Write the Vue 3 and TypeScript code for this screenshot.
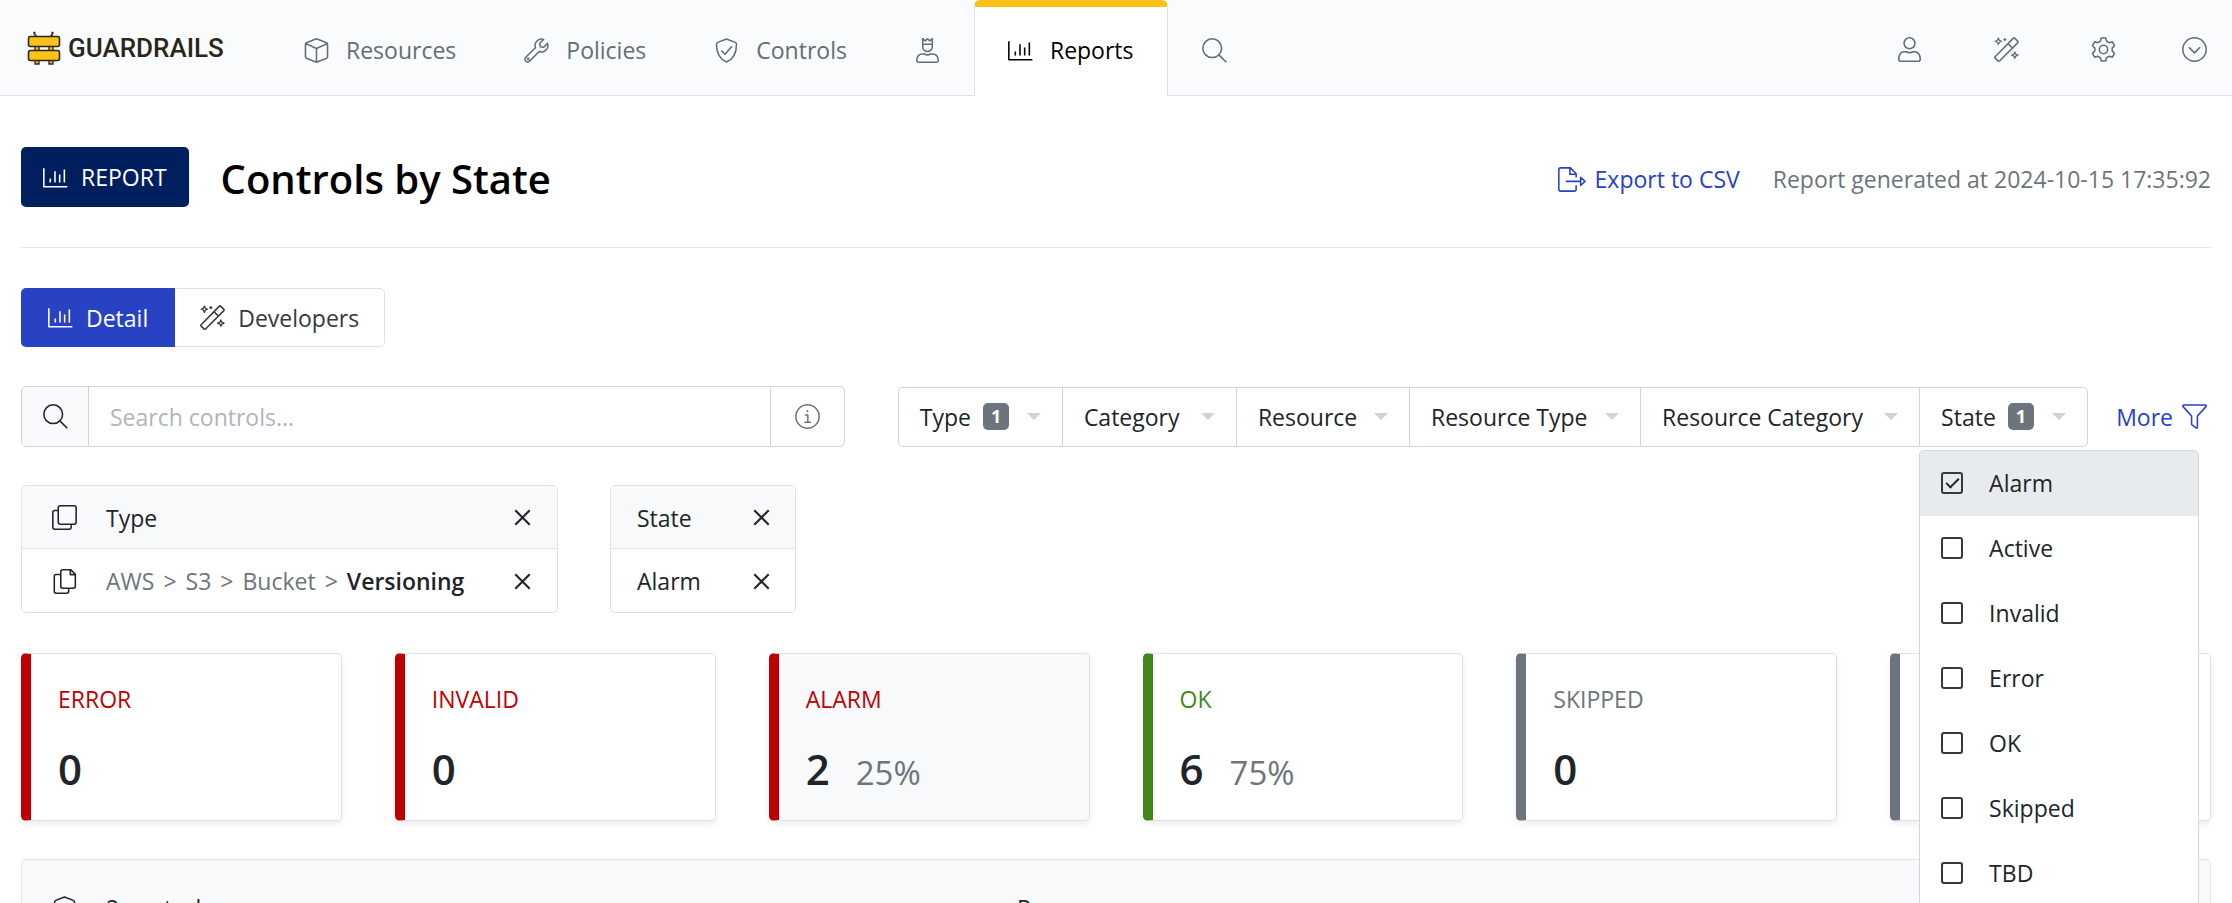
<script setup lang="ts">
import { ref } from 'vue'

interface NavItem { icon: string; label: string; text?: boolean; active?: boolean }
interface Filter { name: string; count?: number }
interface StateCard { label: string; value: number; percent?: string; tone: string; selected?: boolean }

const navItems: NavItem[] = [
  { icon: 'cube', label: 'Resources', text: true },
  { icon: 'wrench', label: 'Policies', text: true },
  { icon: 'shield', label: 'Controls', text: true },
  { icon: 'crown-user', label: 'Grants' },
  { icon: 'chart', label: 'Reports', text: true, active: true },
  { icon: 'search', label: 'Search' },
]
const tools: NavItem[] = [
  { icon: 'user', label: 'Profile' },
  { icon: 'wand', label: 'Developers' },
  { icon: 'gear', label: 'Settings' },
  { icon: 'chevron', label: 'Expand' },
]
const filters: Filter[] = [
  { name: 'Type', count: 1 },
  { name: 'Category' },
  { name: 'Resource' },
  { name: 'Resource Type' },
  { name: 'Resource Category' },
  { name: 'State', count: 1 },
]
const cards: StateCard[] = [
  { label: 'ERROR', value: 0, tone: 'red' },
  { label: 'INVALID', value: 0, tone: 'red' },
  { label: 'ALARM', value: 2, percent: '25%', tone: 'red', selected: true },
  { label: 'OK', value: 6, percent: '75%', tone: 'green' },
  { label: 'SKIPPED', value: 0, tone: 'grey' },
  { label: 'TBD', value: 0, tone: 'grey' },
]
const crumbs = ['AWS', '>', 'S3', '>', 'Bucket', '>']
const states = ['Alarm', 'Active', 'Invalid', 'Error', 'OK', 'Skipped', 'TBD']
const selectedStates = ref<string[]>(['Alarm'])
const query = ref('')

function gearPath(teeth: number): string {
  const points: string[] = []
  for (let i = 0; i < teeth; i++) {
    const a = -Math.PI / 2 + (i * 2 * Math.PI) / teeth
    for (const [r, w] of [[7.9, -3], [11, -2.1], [11, 2.1], [7.9, 3]]) {
      const x = 12 + r * Math.cos(a) - w * Math.sin(a)
      const y = 12 + r * Math.sin(a) + w * Math.cos(a)
      points.push(`${x.toFixed(2)} ${y.toFixed(2)}`)
    }
  }
  return `M${points.join('L')}Z`
}
const gear = gearPath(6)
</script>

<template>
  <div class="page">
    <svg class="sprite" aria-hidden="true">
      <symbol id="i-cube" viewBox="0 0 24 24"><path d="M12 .8 21.7 4.6Q22.6 5 22.6 6V18Q22.6 19 21.7 19.4L12 23.2 2.3 19.4Q1.4 19 1.4 18V6Q1.4 5 2.3 4.6ZM1.8 5.4 12 10 22.2 5.4M12 10V23" /></symbol>
      <symbol id="i-wrench" viewBox="0 0 24 24"><path d="M22.6 5.2A6.2 6.2 0 0 1 14.6 13L5.4 22.2A2.6 2.6 0 0 1 1.7 18.5L11 9.3A6.2 6.2 0 0 1 18.8 1.4L15.1 5.1 15.7 8.3 18.9 8.9Z" /><circle cx="4" cy="20" r=".6" /></symbol>
      <symbol id="i-shield" viewBox="0 0 24 24"><path d="M12 .9 20.4 4.2Q21.6 4.7 21.6 6C21.6 14 18.4 20.4 12 23.1 5.6 20.4 2.4 14 2.4 6Q2.4 4.7 3.6 4.2ZM7 12 10.6 15.6 17.2 8" /></symbol>
      <symbol id="i-crown-user" viewBox="0 0 24 24"><path d="M7.4 .5V8.500A4.600 4.400 0 0 0 16.600 8.500V.5L14.300 2.800 12 .8 9.700 2.800ZM7.400 6H16.600M9 15.400H7.200Q2 15.400 1.600 21.600 1.600 23.200 3.200 23.200H20.800Q22.400 23.200 22.400 21.600 22 15.400 16.800 15.400H15Q12 17 9 15.400Z" /></symbol>
      <symbol id="i-chart" viewBox="0 0 24 24"><path d="M.8 3.2V20.8H23.4M7 13V16.8M11.5 6V16.8M16 9V16.8M20.5 4.2V16.8" /></symbol>
      <symbol id="i-search" viewBox="0 0 24 24"><circle cx="9.8" cy="9.8" r="9" /><path d="M16.4 16.4 23.3 23.3" /></symbol>
      <symbol id="i-user" viewBox="0 0 24 24"><circle cx="12" cy="6" r="5.2" /><path d="M8.6 14.2H7Q1.8 14.4 1.7 21.4 1.7 23.2 3.4 23.2H20.6Q22.3 23.2 22.3 21.4 22.2 14.4 17 14.2H15.4Q12 15.8 8.6 14.2Z" /></symbol>
      <symbol id="i-wand" viewBox="0 0 24 24"><path d="M1.1 18.9 18.4 1.3Q19.2.5 20 1.3L22.7 4Q23.5 4.8 22.7 5.6L5.3 23Q4.5 23.5 3.8 22.9L1.1 20.3Q.6 19.6 1.1 18.9ZM13.4 6.4 17.6 10.6" /><path stroke-width="1.200" d="M4.200 1 5.100 3.200 7.300 4.100 5.100 5 4.200 7.200 3.300 5 1.100 4.100 3.300 3.200ZM20 14.300 20.900 16.500 23.100 17.400 20.900 18.300 20 20.500 19.100 18.300 16.900 17.400 19.100 16.500ZM10.400 1V4M8.900 2.500H11.900" /></symbol>
      <symbol id="i-gear" viewBox="0 0 24 24"><path :d="gear" /><circle cx="12" cy="12" r="4" /></symbol>
      <symbol id="i-chevron" viewBox="0 0 24 24"><circle cx="12" cy="12" r="11.2" /><path d="M6.6 9.8 12 15.2 17.4 9.8" /></symbol>
      <symbol id="i-export" viewBox="0 0 27 24"><path d="M17.5 10V6.5L12 .8H2.6Q.8.8.8 2.6V21.4Q.8 23.2 2.6 23.2H15.7Q17.5 23.2 17.5 21.4V17.5M11.5 1V7H17.4M7.6 13.8H21.5M21.8 9.8V17.8L26 13.8Z" /></symbol>
      <symbol id="i-info" viewBox="0 0 24 24"><circle cx="12" cy="12" r="11.2" /><path d="M9.4 10.5H12.3V17.4M9 17.6H15.3M12 5.8V7.8" /></symbol>
      <symbol id="i-funnel" viewBox="0 0 24 24"><path d="M1.6.9H22.4Q23.7 1.2 23 2.5L14.8 11.6V22.2Q14.6 23.6 13.4 22.9L9.7 20.1Q9.2 19.7 9.2 19V11.6L1 2.5Q.3 1.2 1.6.9Z" /></symbol>
      <symbol id="i-clone" viewBox="0 0 24 24"><rect x="6" y=".8" width="17.2" height="17.6" rx="2" /><path d="M6 5.2H2.8Q.8 5.2.8 7.2V21.2Q.8 23.2 2.8 23.2H16.4Q18.4 23.2 18.4 21.2V18.4" /></symbol>
      <symbol id="i-copy" viewBox="0 0 24 24"><path d="M18.2.8H10.2Q8.4.8 8.4 2.6V16.6Q8.4 18.4 10.2 18.4H20.6Q22.4 18.4 22.4 16.6V5ZM17.6 1V5.4H22.2M8.4 5.2H4Q2.2 5.2 2.2 7V21.4Q2.2 23.2 4 23.2H14.2Q16 23.2 16 21.4V18.4" /></symbol>
      <symbol id="i-close" viewBox="0 0 16 16"><path d="M1.2 1.2 14.8 14.8M14.8 1.2 1.2 14.8" /></symbol>
    </svg>

    <header class="navbar">
      <a class="brand" href="#">
        <svg class="brand-mark" viewBox="0 0 34 36" aria-hidden="true">
          <path d="M8.5 7V4.5M7.4 1.8V4.5M24.5 7V4.5M25.4 1.8V4.5" stroke="#29261c" stroke-width="2" />
          <path d="M8 16h4v6H8zM22 16h4v6h-4zM8 30h4v4H8zM22 30h4v4h-4z" fill="#fdc11a" stroke="#29261c" stroke-width="1.3" />
          <rect x="1.5" y="6.5" width="31" height="10" rx="2" fill="#fdc11a" stroke="#29261c" stroke-width="1.6" />
          <rect x="1.5" y="20.5" width="31" height="10" rx="2" fill="#fdc11a" stroke="#29261c" stroke-width="1.6" />
        </svg>
        <span>GUARDRAILS</span>
      </a>
      <nav class="nav">
        <a v-for="item in navItems" :key="item.label" href="#" class="nav-item" :class="{ active: item.active }" :aria-label="item.label">
          <svg class="icon"><use :href="`#i-${item.icon}`" /></svg>
          <span v-if="item.text">{{ item.label }}</span>
        </a>
      </nav>
      <div class="tools">
        <button v-for="tool in tools" :key="tool.label" type="button" class="tool" :aria-label="tool.label">
          <svg class="icon"><use :href="`#i-${tool.icon}`" /></svg>
        </button>
      </div>
    </header>

    <main class="content">
      <section class="heading">
        <div class="kind"><svg class="icon"><use href="#i-chart" /></svg><span>REPORT</span></div>
        <div class="heading-text">
          <h1>Controls by State</h1>
          <a class="export" href="#"><svg class="icon wide"><use href="#i-export" /></svg><span>Export to CSV</span></a>
          <span class="generated">Report generated at 2024-10-15 17:35:92</span>
        </div>
      </section>

      <div class="tabs">
        <button type="button" class="tab selected"><svg class="icon"><use href="#i-chart" /></svg>Detail</button>
        <button type="button" class="tab"><svg class="icon"><use href="#i-wand" /></svg>Developers</button>
      </div>

      <section class="toolbar">
        <div class="search">
          <label class="search-addon" for="control-search" aria-label="Search controls"><svg class="icon"><use href="#i-search" /></svg></label>
          <input id="control-search" v-model="query" type="text" placeholder="Search controls...">
          <button type="button" class="search-info" aria-label="Search help"><svg class="icon"><use href="#i-info" /></svg></button>
        </div>
        <div class="filters">
          <div v-for="filter in filters" :key="filter.name" class="filter">
            <button type="button" class="filter-button">
              <span>{{ filter.name }}</span>
              <span v-if="filter.count" class="badge">{{ filter.count }}</span>
              <i class="caret" />
            </button>
            <div v-if="filter.name === 'State'" class="menu">
              <label v-for="state in states" :key="state" class="option" :class="{ checked: selectedStates.includes(state) }">
                <input v-model="selectedStates" type="checkbox" :value="state">
                <span>{{ state }}</span>
              </label>
            </div>
          </div>
        </div>
        <button type="button" class="more">More<svg class="icon"><use href="#i-funnel" /></svg></button>
      </section>

      <section class="chips">
        <div class="chip type-chip">
          <div class="chip-row head">
            <svg class="icon"><use href="#i-clone" /></svg>
            <span class="chip-text">Type</span>
            <button type="button" class="close" aria-label="Clear type"><svg><use href="#i-close" /></svg></button>
          </div>
          <div class="chip-row">
            <svg class="icon"><use href="#i-copy" /></svg>
            <span class="chip-text crumbs"><span v-for="(crumb, i) in crumbs" :key="i">{{ crumb }}</span><b>Versioning</b></span>
            <button type="button" class="close" aria-label="Remove Versioning"><svg><use href="#i-close" /></svg></button>
          </div>
        </div>
        <div class="chip state-chip">
          <div class="chip-row head">
            <span class="chip-text">State</span>
            <button type="button" class="close" aria-label="Clear state"><svg><use href="#i-close" /></svg></button>
          </div>
          <div class="chip-row">
            <span class="chip-text">Alarm</span>
            <button type="button" class="close" aria-label="Remove Alarm"><svg><use href="#i-close" /></svg></button>
          </div>
        </div>
      </section>

      <section class="cards">
        <article v-for="card in cards" :key="card.label" class="card" :class="[card.tone, { selected: card.selected }]">
          <div class="card-label">{{ card.label }}</div>
          <div class="card-value"><strong>{{ card.value }}</strong><span v-if="card.percent">{{ card.percent }}</span></div>
        </article>
      </section>

      <section class="results">
        <div class="result-cell"><svg class="icon"><use href="#i-shield" /></svg><span>2 controls</span></div>
        <div class="result-cell">Resource</div>
      </section>
    </main>
  </div>
</template>

<style>
body { margin: 0; background: #fff; }
</style>

<style scoped>
.page { height: 100vh; overflow: hidden; background: #fff; color: #212529; font-family: "Open Sans", "Noto Sans", sans-serif; font-size: 23px; line-height: 32px; }
.page *, .page *::before, .page *::after { box-sizing: border-box; }
.sprite { position: absolute; width: 0; height: 0; }
button, input { font: inherit; color: inherit; }
button { padding: 0; border: 0; background: none; cursor: pointer; }
a { color: inherit; text-decoration: none; }
svg { fill: none; stroke: currentColor; stroke-width: 1.5; stroke-linejoin: round; display: block; }
.icon { width: 25px; height: 25px; flex: none; }
.icon.wide { width: 28px; }

.navbar { display: flex; height: 96px; background: #fafbfd; border-bottom: 1px solid #dee2e6; color: #646d75; }
.brand { display: flex; align-items: center; gap: 7px; width: 270px; padding-left: 27px; color: #29261c; font-family: Roboto, sans-serif; font-size: 26px; font-weight: 500; }
.brand-mark { width: 34px; height: 36px; stroke-linejoin: miter; }
.nav { display: flex; }
.nav-item { display: flex; align-items: center; gap: 17px; height: 96px; padding: 4px 33px 0; border: solid transparent; border-width: 0 1px; }
.nav-item.active { border-color: #dee2e6; border-top: 7px solid #fcc119; border-radius: 6px 6px 0 0; padding-top: 0; padding-bottom: 3px; background: #fff; color: #000; }
.tools { display: flex; align-items: center; margin-left: auto; padding: 4px 25px 0 0; }
.tool + .tool { margin-left: 72px; }
.tools .tool:last-child { margin-left: 66px; }

.content { padding: 0 21px; }
.heading { display: flex; align-items: center; padding: 51px 0 40px; border-bottom: 1px solid #e2e4e7; }
.heading-text { display: flex; flex: 1; align-items: center; height: 60px; padding: 4px 0 0 32px; }
.kind { display: flex; align-items: center; gap: 13px; height: 60px; padding: 0 22px; border-radius: 5px; background: #001f5f; color: #fff; }
h1 { margin: 0; color: #000; font-size: 40px; font-weight: 600; line-height: 56px; }
.export { display: flex; align-items: center; gap: 9px; margin-left: auto; color: #2743c4; }
.generated { margin-left: 33px; color: #6c757d; }

.tabs { display: flex; margin-top: 40px; }
.tab { display: flex; align-items: center; gap: 13px; height: 59px; padding: 0 25px; border: 1px solid #dee2e6; border-left: 0; border-radius: 0 5px 5px 0; color: #343a40; }
.tab.selected { padding: 0 27px; border: 0; border-radius: 5px 0 0 5px; background: #2743c4; color: #fff; }

.toolbar { display: flex; align-items: center; margin-top: 39px; }
.search { display: flex; flex: 823 1 0; height: 61px; border: 1px solid #ced4da; border-radius: 5px; overflow: hidden; }
.search-addon { display: flex; align-items: center; justify-content: center; width: 67px; border-right: 1px solid #ced4da; background: #f8f9fb; }
.search input { flex: 1; min-width: 0; padding: 0 21px; border: 0; outline: 0; background: #fff; }
.search input::placeholder { color: #adb5bd; opacity: 1; }
.search-info { display: flex; align-items: center; justify-content: center; width: 74px; border-left: 1px solid #ced4da; color: #6c757d; }
.filters { display: grid; grid-template-columns: 163fr 174fr 173fr 231fr 279fr 168fr; flex: 1190 1 0; height: 60px; margin-left: 53px; border: 1px solid #ced4da; border-radius: 5px; }
.filter { position: relative; border-left: 1px solid #ced4da; }
.filter:first-child { border-left: 0; }
.filter-button { display: flex; align-items: center; width: 100%; height: 100%; padding: 0 21px; white-space: nowrap; }
.badge { min-width: 26px; margin-left: 12px; border-radius: 5px; background: #6c757d; color: #fff; font-size: 18px; font-weight: 700; line-height: 27px; text-align: center; }
.caret { margin-left: auto; border: solid transparent; border-width: 7px 7px 0; border-top-color: #ced4da; }
.more { display: flex; align-items: center; gap: 9px; margin: 0 4px 0 28px; color: #2743c4; }

.menu { position: absolute; z-index: 2; top: 62px; left: -1px; width: 280px; border: 1px solid #d3d6d9; border-radius: 5px; background: #fff; overflow: hidden; }
.option { display: flex; align-items: center; gap: 26px; height: 65px; padding-left: 21px; }
.option.checked { background: #e8ebee; }
.option input { display: grid; place-items: center; width: 22px; height: 22px; margin: 0; border: 2px solid #343a40; border-radius: 3px; appearance: none; }
.option input:checked::after { content: ""; width: 13px; height: 7px; margin-bottom: 4px; border: solid #212529; border-width: 0 0 2px 2px; transform: rotate(-45deg); }

.chips { display: flex; gap: 52px; margin-top: 38px; }
.chip { border: 1px solid #dee2e6; border-radius: 5px; overflow: hidden; }
.type-chip { flex: 0 0 537px; }
.state-chip { flex: 0 0 186px; }
.chip-row { display: flex; align-items: center; height: 63px; padding: 1px 26px 0 30px; }
.state-chip .chip-row { padding: 1px 25px 0 26px; }
.chip-row.head { border-bottom: 1px solid #e4e7ea; background: #f8f9fb; }
.chip-text { flex: 1; white-space: nowrap; }
.icon + .chip-text { margin-left: 29px; }
.crumbs { display: flex; gap: 9px; color: #6c757d; }
.crumbs b { color: #212529; font-weight: 600; }
.close svg { width: 17px; height: 17px; stroke-width: 2; }

.cards { display: grid; grid-template-columns: repeat(6, 1fr); gap: 53px; margin-top: 40px; }
.card { height: 168px; padding: 29px 27px; border: 1px solid #dee2e6; border-left: 10px solid; border-radius: 5px; box-shadow: 0 3px 6px rgba(0, 0, 0, .08); }
.card.selected { background: #f8f9fb; }
.card.red { border-left-color: #c00000; }
.card.green { border-left-color: #418719; }
.card.grey { border-left-color: #6c757d; }
.red .card-label { color: #c00000; }
.green .card-label { color: #418719; }
.grey .card-label { color: #6c757d; }
.card-value { display: flex; align-items: baseline; gap: 26px; margin-top: 26px; line-height: 56px; }
.card-value strong { font-size: 42px; font-weight: 600; }
.card-value span { color: #6c757d; font-size: 33px; }

.results { display: grid; grid-template-columns: 966fr 1224fr; height: 120px; margin-top: 38px; padding-top: 32px; border: 1px solid #dee2e6; border-radius: 5px; background: #f8f9fb; }
.result-cell { display: flex; align-items: center; gap: 29px; height: 32px; padding-left: 30px; }
</style>
